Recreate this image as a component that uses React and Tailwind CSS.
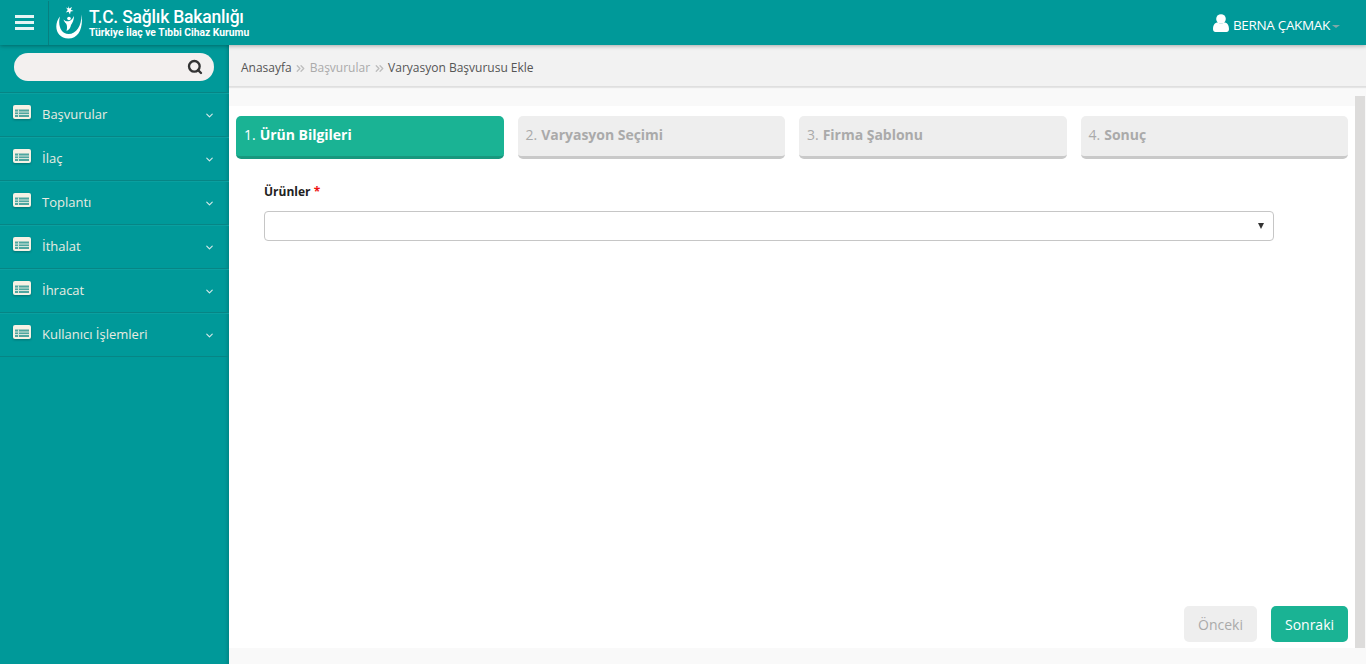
import { ChevronDown, Search, ChevronsRight } from 'lucide-react';

const menu = ['Başvurular', 'İlaç', 'Toplantı', 'İthalat', 'İhracat', 'Kullanıcı İşlemleri'];
const steps = [
  ['1.', 'Ürün Bilgileri'],
  ['2.', 'Varyasyon Seçimi'],
  ['3.', 'Firma Şablonu'],
  ['4.', 'Sonuç'],
];

const ListIcon = () => (
  <svg width="18" height="14" viewBox="0 0 18 14" className="shrink-0 drop-shadow-[0_1px_1px_rgba(0,0,0,0.25)]">
    <rect x="0" y="0" width="18" height="14" rx="2" fill="#f6f1e4" />
    <rect x="2" y="4.5" width="14" height="7.5" fill="#4fa69f" />
    <rect x="2" y="6.5" width="14" height="1" fill="#d4e6dc" />
    <rect x="2" y="9" width="14" height="1" fill="#d4e6dc" />
    <rect x="5" y="4.5" width="1" height="7.5" fill="#d4e6dc" />
  </svg>
);

const Logo = () => (
  <svg width="30" height="36" viewBox="0 0 30 36" className="shrink-0">
    <path d="M6 11.5 C-1 20 2 33.5 14.5 33.5 C24.5 33.5 29.5 23 27.5 9.5 C27.5 21 22.5 29 14.5 29 C7 29 3.5 20 6 11.5 Z" fill="#fff" />
    <path d="M14 1 L15.2 3.6 L18 2 L16.8 4.8 L19.6 6 L16.6 6.6 L16 9.6 L14.6 6.8 L11.8 7.4 L13.8 5 L12 2.6 L14.2 3.6 Z" fill="#fff" />
    <circle cx="15" cy="13.5" r="1.8" fill="#fff" />
    <path d="M9.5 14.5 C11.5 16.5 13.5 16.5 15.5 16 C18 15 19 12.5 20 11 C20 15 18.5 18 17 20 C16.5 23 15 25 12.5 26 C13.5 23 13 19.5 12 18.5 C11 17.8 10 16 9.5 14.5 Z" fill="#fff" />
  </svg>
);

const UserIcon = () => (
  <svg width="16" height="18" viewBox="0 0 16 18" className="shrink-0">
    <circle cx="8" cy="5" r="4.8" fill="#fff" />
    <path d="M0 15 C0 10.5 2.5 8.5 4.5 8.5 C6.5 10 9.5 10 11.5 8.5 C13.5 8.5 16 10.5 16 15 C16 17 15 18 13.5 18 H2.5 C1 18 0 17 0 15 Z" fill="#fff" />
  </svg>
);

export default function App() {
  return (
    <div className="h-[664px] w-[1366px] overflow-hidden flex flex-col bg-white text-[13px] font-['Open_Sans',sans-serif]">
      <header className="h-[45px] shrink-0 flex items-center bg-[#009999] relative z-10 shadow-[0_1px_4px_rgba(0,0,0,0.3)]">
        <div className="w-[48px] h-full flex items-center justify-center shrink-0">
          <div className="w-[19px] flex flex-col gap-[3px]">
            <span className="h-[3px] bg-[#e6f4f4]"></span>
            <span className="h-[3px] bg-[#e6f4f4]"></span>
            <span className="h-[3px] bg-[#e6f4f4]"></span>
          </div>
        </div>
        <div className="h-[44px] border-l border-[#078080] flex items-center pl-[5px] gap-[5px]">
          <Logo />
          <div className="text-white font-['Roboto',sans-serif] -mt-[1px]">
            <div className="text-[17.5px] leading-[20px] font-medium tracking-[-0.2px] whitespace-nowrap">T.C. Sağlık Bakanlığı</div>
            <div className="text-[10.3px] leading-[11px] font-bold whitespace-nowrap">Türkiye İlaç ve Tıbbi Cihaz Kurumu</div>
          </div>
        </div>
        <div className="ml-auto flex items-center pr-[26px] pt-[1px] text-white text-[13.5px]">
          <UserIcon />
          <span className="ml-[4px] pt-[5px] tracking-[-0.33px]">BERNA ÇAKMAK</span>
          <span className="ml-[2px] mt-[6px] border-x-[4px] border-t-[3px] border-x-transparent border-t-[#7fa8a8]"></span>
        </div>
      </header>

      <div className="flex flex-1 min-h-0">
        <aside className="w-[229px] shrink-0 bg-[#009999] flex flex-col shadow-[inset_-4px_0_3px_-2px_rgba(0,0,0,0.12)]">
          <div className="h-[48px] pt-[8px] pl-[14px] pr-[15px] border-b border-[#078585]">
            <div className="h-[28px] rounded-full bg-[#f3f0ef] flex items-center justify-end pr-[11px]">
              <Search size={16} strokeWidth={3.5} className="text-[#333]" />
            </div>
          </div>
          {menu.map((item) => (
            <div key={item} className="h-[44px] flex items-center pl-[13px] pr-[14px] border-t border-[#0aa0a0] border-b border-b-[#078585] text-[#e9ece2]">
              <span className="-mt-[7px]"><ListIcon /></span>
              <span className="ml-[11px] flex-1">{item}</span>
              <ChevronDown size={11} strokeWidth={2.5} className="text-[#d5eaea]" />
            </div>
          ))}
        </aside>

        <main className="flex-1 min-w-0 flex flex-col bg-[#f9f9f9]">
          <div className="h-[42px] shrink-0 flex items-center pl-[12px] pt-[5px] bg-[#f2f2f2] border-b border-[#dfdfdf] shadow-[0_1px_1px_rgba(0,0,0,0.08)] text-[12px] text-[#555]">
            <span>Anasayfa</span>
            <ChevronsRight size={13} strokeWidth={2.5} className="mx-[2.5px] text-[#bdbdbd]" />
            <span className="text-[#aaa]">Başvurular</span>
            <ChevronsRight size={13} strokeWidth={2.5} className="mx-[2.5px] text-[#bdbdbd]" />
            <span>Varyasyon Başvurusu Ekle</span>
          </div>

          <div className="flex flex-1 min-h-0 pt-[9px] pb-[16px]">
            <div className="flex-1 mt-[10px] bg-white flex flex-col pl-[7px] pr-[7px] pt-[10px] pb-[6px]">
              <div className="flex gap-[14px]">
                {steps.map(([num, label], i) => (
                  <div
                    key={num}
                    className={i === 0
                      ? 'flex-1 h-[43px] rounded-[5px] flex items-center pl-[8px] pb-[3px] text-[14px] bg-[#1ab394] border-b-[3px] border-[#18987e] text-white'
                      : 'flex-1 h-[43px] rounded-[5px] flex items-center pl-[8px] pb-[3px] text-[14px] bg-[#eeeeee] border-b-[3px] border-[#c9c9c9] text-[#aaaaaa]'}
                  >
                    <span>{num}</span>
                    <b className="ml-[4px] font-bold tracking-[-0.02px]">{label}</b>
                  </div>
                ))}
              </div>

              <div className="pl-[28px] pt-[24px] w-[1038px]">
                <label className="block h-[20px] leading-[18px] text-[12px] font-bold text-[#222]">
                  Ürünler <span className="text-[#ee1111]">*</span>
                </label>
                <div className="mt-[8px] h-[30px] rounded-[4px] border border-[#c6c6c6] bg-white flex items-center justify-end pr-[9px]">
                  <span className="border-x-[3.5px] border-t-[6px] border-x-transparent border-t-[#333]"></span>
                </div>
              </div>

              <div className="mt-auto flex justify-end gap-[14px]">
                <button className="w-[73px] h-[36px] rounded-[5px] bg-[#eeeeee] text-[#aaaaaa] text-[14px]">Önceki</button>
                <button className="w-[77px] h-[36px] rounded-[5px] bg-[#1ab394] text-white text-[14px]">Sonraki</button>
              </div>
            </div>
            <div className="w-[10px] mr-[1px] bg-[#dddcdb] shrink-0"></div>
          </div>
        </main>
      </div>
    </div>
  );
}
